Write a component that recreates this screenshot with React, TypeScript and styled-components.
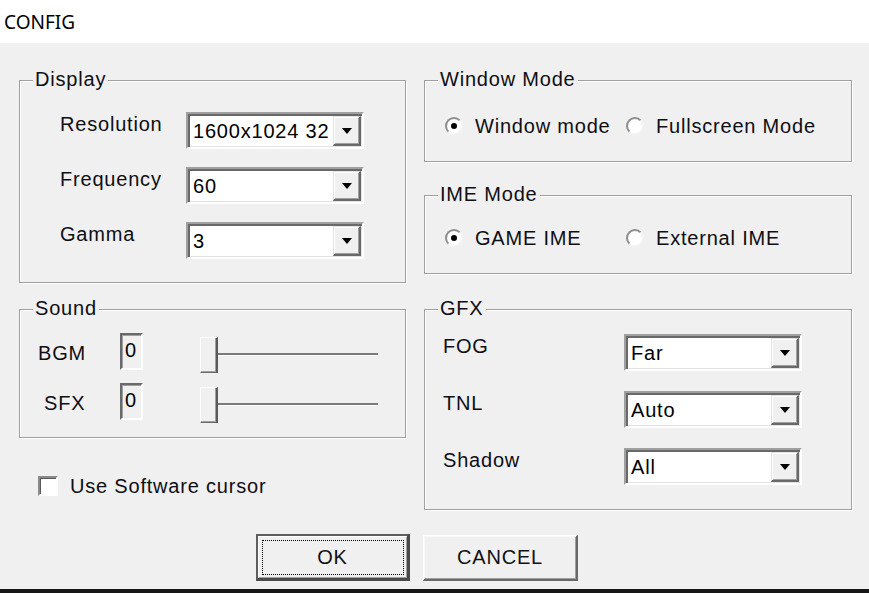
import React from "react";
import styled, { createGlobalStyle } from "styled-components";

const GlobalStyle = createGlobalStyle`
  html, body { margin: 0; padding: 0; background: #f0f0f0; }
  body { font-family: "Liberation Sans", Arial, sans-serif; }
`;

const Window = styled.div`
  width: 869px;
  height: 593px;
  display: flex;
  flex-direction: column;
  overflow: hidden;
`;

const TitleBar = styled.div`
  height: 43px;
  flex: none;
  background: #fff;
  display: flex;
  align-items: center;
  padding-left: 4px;
  font-family: "Noto Sans", "Open Sans", sans-serif;
  font-size: 19px;
  color: #000;
`;

const Body = styled.div`
  flex: 1;
  background: #f0f0f0;
  padding: 37px 18px 0 19px;
  font-size: 20px;
  letter-spacing: 0.8px;
  color: #0e0e14;
`;

const Columns = styled.div`
  display: grid;
  grid-template-columns: 387px 428px;
  column-gap: 18px;
  align-items: start;
`;

const Column = styled.div`
  display: flex;
  flex-direction: column;
`;

const Group = styled.div<{ $h: number; $mt?: number }>`
  box-sizing: border-box;
  height: ${(p) => p.$h}px;
  margin-top: ${(p) => p.$mt ?? 0}px;
  border: 1px solid #a0a0a0;
  box-shadow: inset 1px 1px 0 #fff, 1px 1px 0 #fff;
  display: flex;
  flex-direction: column;
  align-items: flex-start;
`;

const Caption = styled.div`
  margin: -13px 0 0 13px;
  padding: 0 2px;
  height: 22px;
  line-height: 22px;
  background: #f0f0f0;
  white-space: nowrap;
`;

const FormGrid = styled.div<{ $mt: number; $pl: number; $labelW: number; $gap: number }>`
  display: grid;
  grid-template-columns: ${(p) => p.$labelW}px 178px;
  row-gap: ${(p) => p.$gap}px;
  margin-top: ${(p) => p.$mt}px;
  padding-left: ${(p) => p.$pl}px;
`;

const FieldLabel = styled.div`
  line-height: 24px;
  align-self: start;
  white-space: nowrap;
`;

const ComboBox = styled.div`
  box-sizing: border-box;
  width: 178px;
  height: 37px;
  padding: 2px 1px 1px 2px;
  border: 2px solid;
  border-color: #a0a0a0 #fff #fff #a0a0a0;
  box-shadow: inset 2px 2px 0 #696969, inset -1px -1px 0 #e3e3e3;
  background: #fff;
  display: flex;
  align-items: stretch;
`;

const ComboValue = styled.div`
  flex: 1;
  display: flex;
  align-items: center;
  padding-left: 3px;
  color: #000;
  white-space: nowrap;
  overflow: hidden;
`;

const ComboButton = styled.div`
  box-sizing: border-box;
  width: 28px;
  flex: none;
  background: #f0f0f0;
  border: 1px solid;
  border-color: #e3e3e3 #696969 #696969 #e3e3e3;
  border-right-width: 2px;
  border-bottom-width: 2px;
  box-shadow: inset 1px 1px 0 #fff, inset -1px -1px 0 #a0a0a0;
  display: flex;
  align-items: center;
  justify-content: center;
`;

const RadioRow = styled.div<{ $mt: number }>`
  display: grid;
  grid-template-columns: 181px auto;
  margin-top: ${(p) => p.$mt}px;
  padding-left: 20px;
  align-items: center;
`;

const RadioItem = styled.label`
  display: flex;
  align-items: center;
  gap: 12px;
  line-height: 24px;
  white-space: nowrap;
`;

const RadioCircle = styled.span<{ $checked?: boolean }>`
  box-sizing: border-box;
  width: 18px;
  height: 18px;
  border-radius: 50%;
  background: #fff;
  border: 2px solid;
  border-color: #8e8e8e #f4f4f4 #f4f4f4 #8e8e8e;
  display: flex;
  align-items: center;
  justify-content: center;
  &::after {
    content: "";
    width: 6px;
    height: 6px;
    border-radius: 50%;
    background: ${(p) => (p.$checked ? "#000" : "transparent")};
  }
`;

const SoundGrid = styled.div`
  display: grid;
  grid-template-columns: 82px 80px 178px;
  grid-auto-rows: 37px;
  row-gap: 13px;
  margin-top: 14px;
  padding-left: 18px;
`;

const SoundLabel = styled.div<{ $indent?: number }>`
  display: flex;
  align-items: center;
  padding: 3px 0 0 ${(p) => p.$indent ?? 0}px;
`;

const NumberBox = styled.div`
  box-sizing: border-box;
  width: 23px;
  height: 37px;
  border: 2px solid;
  border-color: #6a6a6a #fff #fff #6a6a6a;
  box-shadow: inset 1px 1px 0 #a0a0a0;
  background: #f0f0f0;
  padding: 3px 0 0 3px;
  line-height: 24px;
  color: #000;
`;

const Slider = styled.div`
  display: flex;
  align-items: center;
  padding-top: 6px;
`;

const Thumb = styled.div`
  box-sizing: border-box;
  width: 18px;
  height: 36px;
  flex: none;
  background: #f0f0f0;
  border: 1px solid;
  border-color: #fff #5a5a5a #6a6a6a #fff;
  border-right-width: 2px;
  box-shadow: inset -1px -1px 0 #a0a0a0;
`;

const Track = styled.div`
  flex: 1;
  height: 0;
  border-top: 2px solid #7a7a7a;
  border-bottom: 1px solid #fff;
`;

const CheckRow = styled.label`
  display: flex;
  align-items: center;
  gap: 12px;
  margin-top: 36px;
  padding-left: 19px;
  line-height: 24px;
`;

const CheckBox = styled.span`
  box-sizing: border-box;
  width: 20px;
  height: 20px;
  background: #fff;
  border: 2px solid;
  border-color: #8a8a8a #fff #fff #8a8a8a;
  box-shadow: inset 1px 1px 0 #5a5a5a;
`;

const ButtonRow = styled.div`
  display: flex;
  gap: 13px;
  margin-top: 24px;
  padding-left: 237px;
  align-items: flex-start;
`;

const Button = styled.button<{ $default?: boolean }>`
  box-sizing: border-box;
  width: ${(p) => (p.$default ? 154 : 155)}px;
  height: ${(p) => (p.$default ? 47 : 46)}px;
  margin-top: ${(p) => (p.$default ? 0 : 1)}px;
  font-family: "Liberation Sans", Arial, sans-serif;
  font-size: 20px;
  letter-spacing: 0.8px;
  color: #111;
  background: #f0f0f0;
  padding: 0;
  border: ${(p) => (p.$default ? "2px solid #5e5e5e" : "1px solid")};
  border-color: ${(p) => (p.$default ? "#5e5e5e #4a4a4a #4a4a4a #5e5e5e" : "#fff #696969 #696969 #fff")};
  border-right-width: ${(p) => (p.$default ? 3 : 2)}px;
  border-bottom-width: ${(p) => (p.$default ? 3 : 2)}px;
  box-shadow: ${(p) =>
    p.$default
      ? "inset 1px 1px 0 #fff, inset -1px -1px 0 #a0a0a0"
      : "inset 1px 1px 0 #f8f8f8, inset -1px -1px 0 #a0a0a0"};
  outline: ${(p) => (p.$default ? "1px dotted #000" : "none")};
  outline-offset: -7px;
`;

const BottomEdge = styled.div`
  height: 4px;
  flex: none;
  background: #161616;
`;

const Arrow = () => (
  <svg width="10" height="6" viewBox="0 0 10 6">
    <polygon points="0,0 10,0 5,6" fill="#000" />
  </svg>
);

const Combo = ({ value }: { value: string }) => (
  <ComboBox>
    <ComboValue>{value}</ComboValue>
    <ComboButton>
      <Arrow />
    </ComboButton>
  </ComboBox>
);

const SliderControl = () => (
  <Slider>
    <Thumb />
    <Track />
  </Slider>
);

export default function App() {
  return (
    <>
      <GlobalStyle />
      <Window>
        <TitleBar>CONFIG</TitleBar>
        <Body>
          <Columns>
            <Column>
              <Group $h={203}>
                <Caption>Display</Caption>
                <FormGrid $mt={22} $pl={40} $labelW={126} $gap={18}>
                  <FieldLabel>Resolution</FieldLabel>
                  <Combo value="1600x1024 32" />
                  <FieldLabel>Frequency</FieldLabel>
                  <Combo value="60" />
                  <FieldLabel>Gamma</FieldLabel>
                  <Combo value="3" />
                </FormGrid>
              </Group>
              <Group $h={129} $mt={26}>
                <Caption>Sound</Caption>
                <SoundGrid>
                  <SoundLabel>BGM</SoundLabel>
                  <NumberBox>0</NumberBox>
                  <SliderControl />
                  <SoundLabel $indent={6}>SFX</SoundLabel>
                  <NumberBox>0</NumberBox>
                  <SliderControl />
                </SoundGrid>
              </Group>
              <CheckRow>
                <CheckBox />
                Use Software cursor
              </CheckRow>
            </Column>
            <Column>
              <Group $h={82}>
                <Caption>Window Mode</Caption>
                <RadioRow $mt={24}>
                  <RadioItem>
                    <RadioCircle $checked />
                    Window mode
                  </RadioItem>
                  <RadioItem>
                    <RadioCircle />
                    Fullscreen Mode
                  </RadioItem>
                </RadioRow>
              </Group>
              <Group $h={79} $mt={33}>
                <Caption>IME Mode</Caption>
                <RadioRow $mt={21}>
                  <RadioItem>
                    <RadioCircle $checked />
                    GAME IME
                  </RadioItem>
                  <RadioItem>
                    <RadioCircle />
                    External IME
                  </RadioItem>
                </RadioRow>
              </Group>
              <Group $h={201} $mt={35}>
                <Caption>GFX</Caption>
                <FormGrid $mt={15} $pl={18} $labelW={181} $gap={20}>
                  <FieldLabel>FOG</FieldLabel>
                  <Combo value="Far" />
                  <FieldLabel>TNL</FieldLabel>
                  <Combo value="Auto" />
                  <FieldLabel>Shadow</FieldLabel>
                  <Combo value="All" />
                </FormGrid>
              </Group>
            </Column>
          </Columns>
          <ButtonRow>
            <Button $default>OK</Button>
            <Button>CANCEL</Button>
          </ButtonRow>
        </Body>
        <BottomEdge />
      </Window>
    </>
  );
}
